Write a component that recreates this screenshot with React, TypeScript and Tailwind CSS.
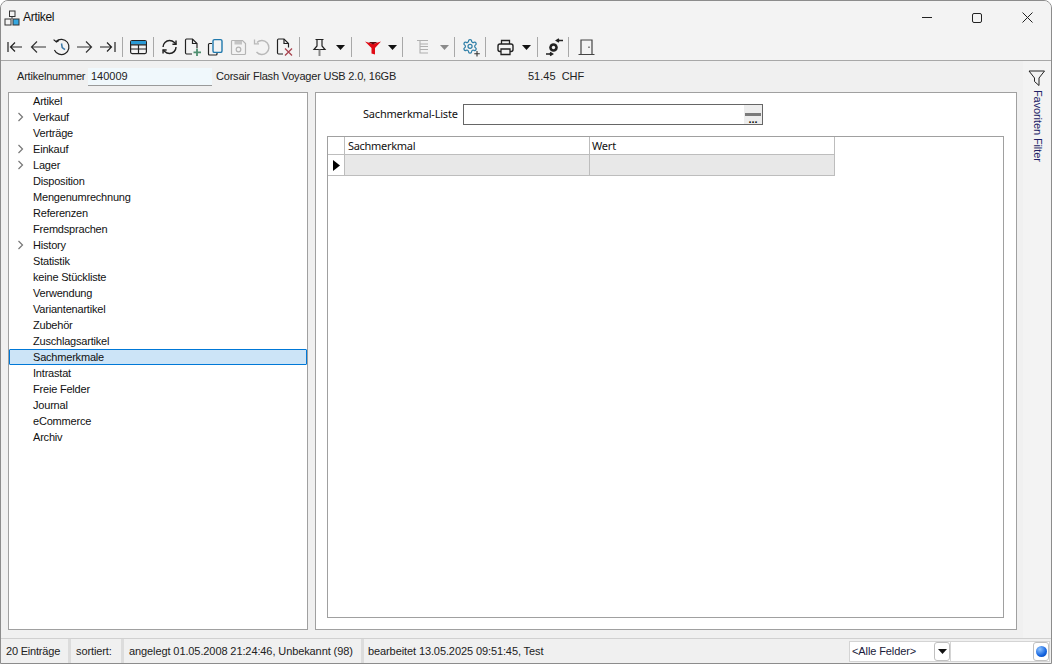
import type { ReactNode } from "react"

const treeItems = [
  { label: "Artikel" },
  { label: "Verkauf", children: true },
  { label: "Verträge" },
  { label: "Einkauf", children: true },
  { label: "Lager", children: true },
  { label: "Disposition" },
  { label: "Mengenumrechnung" },
  { label: "Referenzen" },
  { label: "Fremdsprachen" },
  { label: "History", children: true },
  { label: "Statistik" },
  { label: "keine Stückliste" },
  { label: "Verwendung" },
  { label: "Variantenartikel" },
  { label: "Zubehör" },
  { label: "Zuschlagsartikel" },
  { label: "Sachmerkmale", selected: true },
  { label: "Intrastat" },
  { label: "Freie Felder" },
  { label: "Journal" },
  { label: "eCommerce" },
  { label: "Archiv" },
]

function Icon({ children, width = 23 }: { children: ReactNode; width?: number }) {
  return (
    <svg width={width} height="22" viewBox={`0 0 ${width} 22`} fill="none" stroke="#222" strokeWidth="1.2">
      {children}
    </svg>
  )
}

function Sep() {
  return <div className="w-px h-[20px] bg-[#a8a8a8] shrink-0" />
}

function Drop({ grey }: { grey?: boolean }) {
  return (
    <svg width="10" height="6" viewBox="0 0 10 6" className="mt-[2px]">
      <path d="M0 0h9L4.500 5z" fill={grey ? "#8a8a8a" : "#111"} />
    </svg>
  )
}

function Toolbar() {
  return (
    <div className="flex items-center h-[26px] pl-[3px] bg-[#f3f3f3]">
      <div className="w-[23px] flex justify-center">
        <Icon>
          <path d="M4 6v10M18 11H6.500M11 6.500 6.500 11l4.500 4.500" />
        </Icon>
      </div>
      <div className="w-[23px] flex justify-center">
        <Icon>
          <path d="M19 11H4.500M10 5.500 4.500 11l5.500 5.500" stroke="#333" />
        </Icon>
      </div>
      <div className="w-[23px] flex justify-center">
        <Icon>
          <path d="M6 5.500A7.600 7.600 0 1 1 4.400 14" />
          <path d="M3.600 3.600 6.400 6l2.600-1.600" />
          <path d="M11.500 7.500 12.200 11.500l2.800 2.200" stroke="#3b78a8" strokeWidth="1.500" />
        </Icon>
      </div>
      <div className="w-[23px] flex justify-center">
        <Icon>
          <path d="M4 11h14.500M13 5.500l5.500 5.500-5.500 5.500" stroke="#333" />
        </Icon>
      </div>
      <div className="w-[23px] flex justify-center">
        <Icon>
          <path d="M19 6v10M4 11h11.500M11 6.500l4.500 4.500-4.500 4.500" />
        </Icon>
      </div>
      <div className="ml-[3px]">
        <Sep />
      </div>
      <div className="w-[30px] flex justify-center">
        <Icon>
          <rect x="3.600" y="4.600" width="15.800" height="13" rx="1.500" />
          <rect x="4" y="5" width="15" height="3.600" fill="#2a9ad6" stroke="none" />
          <path d="M4 8.800h15M4 13h15M11.500 9v8.500" />
        </Icon>
      </div>
      <Sep />
      <div className="ml-[4px] w-[23px] flex justify-center">
        <Icon>
          <g transform="translate(2.900 2.400) scale(0.72)" strokeWidth="2">
            <path d="M3 12a9 9 0 0 1 9-9 9.750 9.750 0 0 1 6.740 2.740L21 8" />
            <path d="M21 3v5h-5" />
            <path d="M21 12a9 9 0 0 1-9 9 9.750 9.750 0 0 1-6.740-2.740L3 16" />
            <path d="M8 16H3v5" />
          </g>
        </Icon>
      </div>
      <div className="w-[23px] flex justify-center">
        <Icon>
          <path d="M16 12V7.500L11.500 3H5.500A1.200 1.200 0 0 0 4.500 4v13A1.200 1.200 0 0 0 5.500 18H11" />
          <path d="M11.500 3v4.500H16" />
          <path d="M16 12.500v7.500M12.500 16.300h7.500" stroke="#4f8f70" strokeWidth="1.800" />
        </Icon>
      </div>
      <div className="w-[23px] flex justify-center">
        <Icon>
          <path d="M8 7.500H5.500a1 1 0 0 0-1 1V18a1 1 0 0 0 1 1H12a1 1 0 0 0 1-1v-1" />
          <rect x="9" y="3.600" width="9" height="12.800" rx="1.500" stroke="#1f78ac" strokeWidth="1.400" />
        </Icon>
      </div>
      <div className="w-[23px] flex justify-center">
        <Icon>
          <path d="M5 4.500h10.500l3 3v10a1 1 0 0 1-1 1H5.500a1 1 0 0 1-1-1V5.500a1 1 0 0 1 .500-1z" stroke="#b4b4b4" />
          <rect x="7.500" y="5" width="7.500" height="3.500" fill="#c4c4c4" stroke="none" />
          <circle cx="11.500" cy="13.500" r="2.300" stroke="#b4b4b4" />
        </Icon>
      </div>
      <div className="w-[23px] flex justify-center">
        <Icon>
          <path d="M7 6.500A7 7 0 1 1 6.500 16" stroke="#b8b8b8" strokeWidth="1.400" />
          <path d="M4.500 3.500v4.300h4.500" stroke="#b8b8b8" strokeWidth="1.300" />
        </Icon>
      </div>
      <div className="w-[23px] flex justify-center">
        <Icon>
          <path d="M15.500 11.500V7.500L11 3H5.500A1.200 1.200 0 0 0 4.500 4v13a1.200 1.200 0 0 0 1 1H10" />
          <path d="M11 3v4.500h4.500" />
          <path d="M12 12.500l7 7M19 12.500l-7 7" stroke="#a8434f" strokeWidth="1.300" />
        </Icon>
      </div>
      <div className="ml-[3px]">
        <Sep />
      </div>
      <div className="ml-[8px] w-[23px] flex justify-center">
        <Icon>
          <path d="M7.500 3.500h8M9 3.500v6.500l-3 3.500h11L14 10V3.500" />
          <path d="M11.500 13.500v6.500" stroke="#888" strokeWidth="2" />
        </Icon>
      </div>
      <div className="w-[20px] flex justify-center">
        <Drop />
      </div>
      <Sep />
      <div className="ml-[9px] w-[23px] flex justify-center">
        <Icon>
          <path d="M4 5.500 12 8l8-2.500-6 6.500v6.500l-3.500-1V12z" fill="#e00a14" stroke="none" />
          <path d="M7.500 6h9L12 8.500z" fill="#5c0a0e" stroke="none" />
        </Icon>
      </div>
      <div className="w-[18px] flex justify-center">
        <Drop />
      </div>
      <Sep />
      <div className="ml-[9px] w-[23px] flex justify-center">
        <Icon>
          <path d="M5 4.500h11M8 4.500v13M8 8h8M8 10.500h8M8 13.500h8M8 17h8" stroke="#b0b0b0" strokeWidth="1.100" />
        </Icon>
      </div>
      <div className="w-[19px] flex justify-center">
        <Drop grey />
      </div>
      <Sep />
      <div className="w-[30px] flex justify-center">
        <Icon>
          <g transform="translate(2.900 2.200) scale(0.68)" stroke="#2f7fa8" strokeWidth="1.800">
            <path d="M12.220 2h-.44a2 2 0 0 0-2 2v.18a2 2 0 0 1-1 1.730l-.43.25a2 2 0 0 1-2 0l-.15-.08a2 2 0 0 0-2.730.73l-.22.38a2 2 0 0 0 .73 2.730l.15.1a2 2 0 0 1 1 1.720v.51a2 2 0 0 1-1 1.740l-.15.09a2 2 0 0 0-.73 2.730l.22.38a2 2 0 0 0 2.730.73l.15-.08a2 2 0 0 1 2 0l.43.25a2 2 0 0 1 1 1.730V20a2 2 0 0 0 2 2h.44a2 2 0 0 0 2-2v-.18a2 2 0 0 1 1-1.730l.43-.25a2 2 0 0 1 2 0l.15.08a2 2 0 0 0 2.730-.73l.22-.39a2 2 0 0 0-.73-2.730l-.15-.08a2 2 0 0 1-1-1.740v-.5a2 2 0 0 1 1-1.740l.15-.09a2 2 0 0 0 .73-2.730l-.22-.38a2 2 0 0 0-2.730-.73l-.15.08a2 2 0 0 1-2 0l-.43-.25a2 2 0 0 1-1-1.730V4a2 2 0 0 0-2-2z" />
            <circle cx="12" cy="12" r="3" />
          </g>
          <path d="M18 15v5.500M15.300 17.800h5.500" stroke="#333" strokeWidth="1.100" />
        </Icon>
      </div>
      <Sep />
      <div className="ml-[8px] w-[23px] flex justify-center">
        <Icon>
          <path d="M7.500 8V4.500h8V8" strokeWidth="1.300" />
          <rect x="4" y="8" width="15" height="7.500" rx="2" strokeWidth="1.400" />
          <path d="M7 13h9v5.500H7z" fill="#f3f3f3" strokeWidth="1.300" />
        </Icon>
      </div>
      <div className="w-[20px] flex justify-center">
        <Drop />
      </div>
      <Sep />
      <div className="w-[30px] flex justify-center">
        <Icon>
          <circle cx="11.500" cy="11.500" r="4.300" fill="#222" stroke="none" />
          <circle cx="11.500" cy="11.500" r="1.700" fill="#f3f3f3" stroke="none" />
          <path d="M15 4.500h6M17 3l-2.500 1.500L17 6M4 18h6M8 16.500l2.500 1.500L8 19.500" strokeWidth="1.500" />
        </Icon>
      </div>
      <Sep />
      <div className="w-[34px] flex justify-center">
        <Icon>
          <path d="M6 18V4h11v14M3.500 18.500h16" stroke="#444" />
          <path d="M14 10.500V12" stroke="#444" />
        </Icon>
      </div>
    </div>
  )
}

function TitleBar() {
  return (
    <div className="flex items-center h-[33px] bg-[#f3f3f3]">
      <svg width="17" height="16" viewBox="0 0 17 16" className="ml-[3px] mt-px" fill="none" stroke="#333" strokeWidth="1">
        <rect x="5.500" y="1" width="5.500" height="5.500" />
        <rect x="1" y="9" width="6" height="6" />
        <rect x="9" y="9" width="6" height="6" fill="#35a7e0" />
        <path d="M8 6.500V9" />
      </svg>
      <span className="ml-[2px] -mt-[2px] text-[12px] tracking-[-0.3px] text-[#111]">Artikel</span>
      <div className="ml-auto -mr-px flex">
        <div className="w-[50px] h-[33px] flex items-center justify-center">
          <div className="w-[10px] h-px bg-[#222]" />
        </div>
        <div className="w-[50px] h-[33px] flex items-center justify-center">
          <div className="w-[10px] h-[10px] border border-[#222] rounded-[2px]" />
        </div>
        <div className="w-[50px] h-[33px] flex items-center justify-center">
          <svg width="11" height="11" viewBox="0 0 11 11" stroke="#222" strokeWidth="1">
            <path d="M.5.500l10 10M10.500.500l-10 10" />
          </svg>
        </div>
      </div>
    </div>
  )
}

function Tree() {
  return (
    <div className="w-[300px] h-[538px] bg-white border border-[#a0a0a0] shrink-0 text-[11px] tracking-[-0.2px] text-[#111]">
      {treeItems.map((item) => (
        <div
          key={item.label}
          className={
            item.selected
              ? "flex items-center h-4 bg-[#cce4f7] border border-[#0078d7] rounded-[1px]"
              : "flex items-center h-4 border border-transparent"
          }
        >
          <div className="w-[23px] flex justify-center pr-[3px]">
            {item.children && (
              <svg width="7" height="10" viewBox="0 0 7 10" fill="none" stroke="#777" strokeWidth="1.200">
                <path d="M1.500 1l4 4-4 4" />
              </svg>
            )}
          </div>
          <span>{item.label}</span>
        </div>
      ))}
    </div>
  )
}

function DetailPanel() {
  return (
    <div className="flex-1 h-[538px] bg-white border border-[#a0a0a0] pt-[11px] pl-[11px] pr-[12px] pb-[11px] flex flex-col">
      <div className="flex items-center h-[21px] mb-[11px]">
        <span className="ml-[36px] w-[94px] text-right text-[11px] tracking-[-0.2px] whitespace-nowrap text-[#111] font-['Noto_Sans',sans-serif]">
          Sachmerkmal-Liste
        </span>
        <div className="ml-[6px] w-[300px] h-[21px] border border-[#666] bg-white flex justify-end">
          <div className="w-[18px] bg-[#ededed] flex flex-col items-center pt-[8px]">
            <div className="w-[16px] h-[3px] bg-[#7a7a7a]" />
            <div className="text-[11px] leading-[7px] font-bold text-[#111]">...</div>
          </div>
        </div>
      </div>
      <div className="flex-1 border border-[#a0a0a0] bg-white">
        <div className="w-[507px] text-[11px] text-[#111] font-['Noto_Sans',sans-serif]">
          <div className="flex h-[18px] border-b border-[#bdbdbd]">
            <div className="w-[17px] border-r border-[#bdbdbd]" />
            <div className="w-[245px] border-r border-[#bdbdbd] pl-[3px] leading-[18px] tracking-[-0.3px]">Sachmerkmal</div>
            <div className="flex-1 border-r border-[#bdbdbd] pl-[2px] leading-[18px] tracking-[-0.2px]">Wert</div>
          </div>
          <div className="flex h-[21px] border-b border-[#bdbdbd]">
            <div className="w-[17px] border-r border-[#bdbdbd] flex items-center pl-[5px]">
              <svg width="7" height="11" viewBox="0 0 7 11">
                <path d="M0 0l7 5.500-7 5.500z" fill="#000" />
              </svg>
            </div>
            <div className="w-[245px] border-r border-[#bdbdbd] bg-[#e8e8e8]" />
            <div className="flex-1 border-r border-[#bdbdbd] bg-[#e8e8e8]" />
          </div>
        </div>
      </div>
    </div>
  )
}

function Sidebar() {
  return (
    <div className="w-[28px] bg-[#f3f3f3] flex flex-col items-center shrink-0 pt-[9px]">
      <svg width="18" height="16" viewBox="0 0 18 16" fill="none" stroke="#222" strokeWidth="1">
        <path d="M1 1h15.500L11 8v7.500L6.500 11.500V8z" />
      </svg>
      <div className="mt-[4px] text-[11px] leading-none tracking-[-0.1px] whitespace-nowrap text-[#222266] [writing-mode:vertical-rl]">
        Favoriten Filter
      </div>
    </div>
  )
}

function StatusBar() {
  return (
    <div className="flex h-[25px] border-t border-[#d0d0d0] bg-[#f0f0f0] text-[11px] tracking-[-0.1px] text-[#222]">
      <div className="w-[70px] pl-[5px] leading-[24px] border-r-[3px] border-[#dcdcdc] tracking-[-0.2px]">20 Einträge</div>
      <div className="w-[53px] pl-[5px] leading-[24px] border-r-[3px] border-[#dcdcdc]">sortiert:</div>
      <div className="w-[240px] pl-[5px] leading-[24px] border-r-[3px] border-[#dcdcdc] whitespace-nowrap">
        angelegt 01.05.2008 21:24:46, Unbekannt (98)
      </div>
      <div className="pl-[4px] leading-[24px] whitespace-nowrap">bearbeitet 13.05.2025 09:51:45, Test</div>
      <div className="ml-auto mr-[1px] mt-[2px] flex h-[21px] w-[201px] border border-[#d4d4d4] bg-white">
        <div className="w-[84px] pl-[2px] leading-[19px] text-[#1a1a3a]">&lt;Alle Felder&gt;</div>
        <div className="w-[16px] border border-[#c0c0c0] rounded-[3px] bg-white flex items-center justify-center">
          <svg width="9" height="5" viewBox="0 0 9 5">
            <path d="M0 0h9L4.500 5z" fill="#111" />
          </svg>
        </div>
        <div className="flex-1 border-l border-[#d4d4d4]" />
        <div className="w-[16px] border border-[#c0c0c0] rounded-[3px] bg-white flex items-center justify-center">
          <div className="w-[11px] h-[11px] rounded-full bg-[radial-gradient(circle_at_35%_30%,#8fc4ff,#1464e0_60%,#0a3fa0)]" />
        </div>
      </div>
    </div>
  )
}

export default function App() {
  return (
    <div className="w-[1052px] h-[664px] overflow-hidden bg-white font-['Liberation_Sans',sans-serif]">
      <div className="h-full flex flex-col border border-[#8c8c8c] rounded-t-[8px] overflow-hidden bg-[#f0f0f0]">
        <TitleBar />
        <Toolbar />
        <div className="h-px bg-[#a8a8a8]" />

        <div className="flex flex-1 min-h-0">
          <div className="flex-1 min-w-0 flex flex-col pl-[7px] pr-[6px]">
            {/* Artikel header */}
            <div className="flex items-center h-[31px] text-[11px] tracking-[-0.2px] text-[#222] whitespace-nowrap">
              <span className="ml-[9px] w-[71px]">Artikelnummer</span>
              <div className="w-[124px] h-[18px] mt-px bg-[#f0f8fc] border-b border-[#9a9a9a] pl-[3px] leading-[17px] tracking-normal">140009</div>
              <span className="ml-[4px] w-[312px]">Corsair Flash Voyager USB 2.0, 16GB</span>
              <span className="whitespace-pre tracking-normal">51.45  CHF</span>
            </div>
            <div className="flex gap-[7px]">
              <Tree />
              <DetailPanel />
            </div>
          </div>
          <Sidebar />
        </div>

        <StatusBar />
      </div>
    </div>
  )
}
